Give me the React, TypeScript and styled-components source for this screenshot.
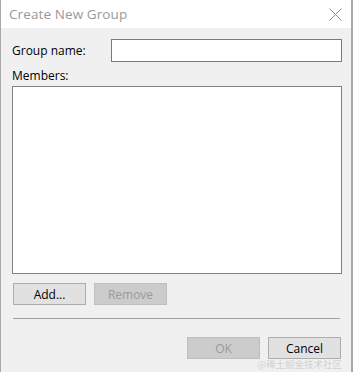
import styled, { createGlobalStyle } from 'styled-components';

const GlobalStyle = createGlobalStyle`
  html, body {
    margin: 0;
    padding: 0;
    background: #ffffff;
  }
  * {
    box-sizing: border-box;
  }
`;

const Window = styled.div`
  display: flex;
  flex-direction: column;
  width: 353px;
  height: 372px;
  border-left: 1px solid #a8a8a8;
  border-right: 2px solid #a8a8a8;
  background: #f0f0f0;
  font-family: 'Segoe UI', 'Open Sans', 'Noto Sans', sans-serif;
  color: #000;
`;

const TitleBar = styled.div`
  display: flex;
  align-items: center;
  justify-content: space-between;
  height: 31px;
  padding: 0 8px 0 8px;
  background: #ffffff;
`;

const Title = styled.div`
  font-size: 13.5px;
  color: #999999;
  letter-spacing: 0.1px;
`;

const CloseButton = styled.div`
  display: flex;
  align-items: center;
  justify-content: center;
  width: 14px;
  height: 14px;
  margin-right: 1px;
`;

const Body = styled.div`
  display: flex;
  flex-direction: column;
  flex: 1;
  padding: 11px 9px 0 11px;
`;

const FieldRow = styled.div`
  display: flex;
  align-items: center;
  height: 23px;
`;

const Label = styled.div`
  font-size: 12px;
  line-height: 16px;
`;

const NameLabel = styled(Label)`
  width: 99px;
`;

const TextInput = styled.div`
  flex: 1;
  height: 23px;
  background: #ffffff;
  border: 1px solid #7a7a7a;
`;

const MembersLabel = styled(Label)`
  margin-top: 6px;
`;

const ListBox = styled.div`
  height: 188px;
  margin-top: 2px;
  background: #ffffff;
  border: 1px solid #828282;
`;

const ButtonRow = styled.div<{ $align?: string }>`
  display: flex;
  gap: 8px;
  justify-content: ${(p) => p.$align || 'flex-start'};
`;

const ListButtons = styled(ButtonRow)`
  margin-top: 9px;
  padding-left: 1px;
`;

const FooterButtons = styled(ButtonRow)`
  margin-top: 18px;
  padding-right: 1px;
`;

const Button = styled.div<{ $disabled?: boolean }>`
  display: flex;
  align-items: center;
  justify-content: center;
  width: 73px;
  height: 22px;
  font-size: 12px;
  background: ${(p) => (p.$disabled ? '#cccccc' : '#e1e1e1')};
  border: 1px solid ${(p) => (p.$disabled ? '#bfbfbf' : '#adadad')};
  color: ${(p) => (p.$disabled ? '#9a9a9a' : '#000000')};
`;

const Separator = styled.div`
  height: 1px;
  margin: 13px 2px 0 1px;
  background: #a0a0a0;
`;

const Watermark = styled.div`
  align-self: flex-end;
  margin-top: auto;
  margin-bottom: 2px;
  font-family: 'Noto Sans CJK SC', sans-serif;
  font-size: 9.5px;
  line-height: 11px;
  color: #d2d2d2;
`;

const App = () => {
  return (
    <>
      <GlobalStyle />
      <Window>
        <TitleBar>
          <Title>Create New Group</Title>
          <CloseButton>
            <svg width="13" height="13" viewBox="0 0 13 13">
              <path d="M0.5 0.5 L12.5 12.5 M12.5 0.5 L0.5 12.5" stroke="#8a8a8a" strokeWidth="1" fill="none" />
            </svg>
          </CloseButton>
        </TitleBar>
        <Body>
          <FieldRow>
            <NameLabel>Group name:</NameLabel>
            <TextInput />
          </FieldRow>
          <MembersLabel>Members:</MembersLabel>
          <ListBox />
          <ListButtons>
            <Button>Add...</Button>
            <Button $disabled>Remove</Button>
          </ListButtons>
          <Separator />
          <FooterButtons $align="flex-end">
            <Button $disabled>OK</Button>
            <Button>Cancel</Button>
          </FooterButtons>
          <Watermark>@稀土掘金技术社区</Watermark>
        </Body>
      </Window>
    </>
  );
};

export default App;
